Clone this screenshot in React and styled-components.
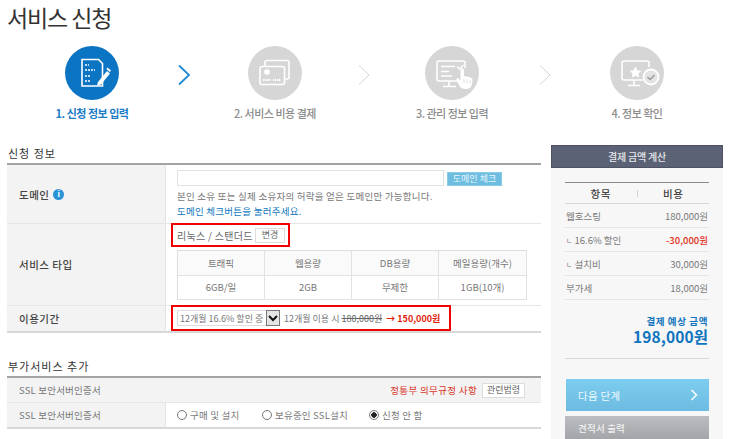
import React from "react";
import styled, { createGlobalStyle } from "styled-components";

const GlobalStyle = createGlobalStyle`
  html, body {
    margin: 0;
    padding: 0;
    background: #fff;
  }
  body {
    font-family: "Noto Sans CJK KR", "Liberation Sans", sans-serif;
    font-size: 10px;
    color: #666;
  }
  * {
    box-sizing: border-box;
  }
`;

const Page = styled.div`
  width: 730px;
  height: 439px;
  overflow: hidden;
  padding-left: 7px;
`;

const Title = styled.h1`
  margin: 0;
  height: 46px;
  padding-top: 2px;
  font-size: 23px;
  line-height: 30px;
  font-weight: 400;
  letter-spacing: -1.1px;
  color: #333;
`;

const Steps = styled.div`
  display: flex;
  align-items: flex-start;
  padding-left: 25px;
  height: 99px;
`;

const Step = styled.div`
  width: 120px;
  display: flex;
  flex-direction: column;
  align-items: center;
`;

const Circle = styled.div`
  width: 54px;
  height: 54px;
  border-radius: 50%;
  background: ${(p) => (p.$active ? "#0b75c4" : "#d6d6d6")};
`;

const StepLabel = styled.div`
  margin-top: 3px;
  font-size: 11px;
  line-height: 20px;
  font-weight: ${(p) => (p.$active ? 700 : 500)};
  letter-spacing: -0.5px;
  color: ${(p) => (p.$active ? "#1b7cc8" : "#8c8c8c")};
`;

const Arrow = styled.div`
  width: ${(p) => p.$w}px;
  height: 54px;
  padding-top: 4px;
  display: flex;
  align-items: center;
  justify-content: center;
`;

const Columns = styled.div`
  display: flex;
  gap: 10px;
`;

const Main = styled.div`
  width: 534px;
`;

const SectionTitle = styled.h2`
  margin: 0;
  height: ${(p) => p.$h}px;
  font-size: 11px;
  line-height: 16px;
  font-weight: 400;
  letter-spacing: 1px;
  color: #333;
  padding: ${(p) => p.$top}px 0 0 1px;
  border-bottom: 2px solid #a3a3a3;
`;

const Row = styled.div`
  display: flex;
  height: ${(p) => p.$h}px;
  border-bottom: ${(p) => (p.$last ? "2px solid #d8d8d8" : "1px solid #e6e6e6")};
`;

const Label = styled.div`
  width: 159px;
  flex: none;
  display: flex;
  align-items: center;
  gap: 4px;
  padding-left: 12px;
  background: #f3f3f3;
  border-right: 1px solid #e2e2e2;
  font-size: ${(p) => (p.$bold ? "10.5px" : "9.5px")};
  font-weight: ${(p) => (p.$bold ? 500 : 400)};
  letter-spacing: ${(p) => (p.$bold ? "0.5px" : "0.2px")};
  color: ${(p) => (p.$bold ? "#444" : "#777")};
`;

const Cell = styled.div`
  flex: 1;
  min-width: 0;
  padding: ${(p) => p.$pad || "0 0 0 11px"};
`;

const InfoDot = styled.span`
  width: 11px;
  height: 11px;
  border-radius: 50%;
  background: #2a94d6;
  color: #fff;
  font-family: "Liberation Sans", sans-serif;
  font-size: 9px;
  font-weight: 700;
  line-height: 11px;
  text-align: center;
`;

const DomainLine = styled.div`
  display: flex;
  align-items: flex-start;
  gap: 3px;
`;

const DomainInput = styled.input`
  width: 267px;
  height: 16px;
  padding: 0 4px;
  border: 1px solid #e0e0e0;
  background: #fff;
  outline: none;
`;

const CheckButton = styled.button`
  width: 55px;
  height: 14px;
  margin-top: 2px;
  padding: 0;
  border: 1px solid #8accE6;
  background: #6dbde0;
  color: #e8f6fc;
  font-family: inherit;
  font-size: 9px;
  line-height: 12px;
`;

const Hint = styled.p`
  margin: 0;
  height: 15px;
  font-size: 9.5px;
  line-height: 15px;
  letter-spacing: 0.25px;
  color: ${(p) => (p.$link ? "#0f77bd" : "#777")};
  &:first-of-type {
    margin-top: 3px;
  }
`;

const Highlight = styled.div`
  display: flex;
  align-items: center;
  border: 2px solid #f00000;
  margin: -1px 0 0 -6px;
  width: ${(p) => p.$w}px;
  height: ${(p) => p.$h}px;
  padding-left: ${(p) => p.$pad}px;
`;

const PlanName = styled.span`
  flex: none;
  width: 78px;
  font-size: 10px;
  letter-spacing: 0.3px;
  color: #666;
  white-space: nowrap;
`;

const SmallButton = styled.button`
  flex: none;
  width: ${(p) => p.$w}px;
  height: 15px;
  padding: 0;
  margin-left: ${(p) => p.$left || 0}px;
  border: 1px solid #ddd;
  background: #fff;
  color: #666;
  font-family: inherit;
  font-size: 9px;
  line-height: 12px;
  white-space: nowrap;
`;

const SpecTable = styled.div`
  display: grid;
  grid-template-columns: 87px 87px 87px 88px;
  width: 350px;
  margin-top: 3px;
  border-top: 1px solid #ddd;
  border-left: 1px solid #ddd;
`;

const SpecCell = styled.div`
  height: 24.5px;
  display: flex;
  align-items: center;
  justify-content: center;
  font-size: 9.5px;
  color: #777;
  background: ${(p) => (p.$head ? "#fafafa" : "#fff")};
  border-right: 1px solid #e2e2e2;
  border-bottom: 1px solid #e2e2e2;
`;

const FakeSelect = styled.div`
  display: flex;
  align-items: center;
  justify-content: space-between;
  width: 103px;
  height: 16px;
  flex: none;
  padding-left: 2px;
  border: 1px solid #ddd;
  font-size: 9px;
  color: #777;
  white-space: nowrap;
`;

const SelectArrow = styled.span`
  width: 14px;
  height: 16px;
  margin-right: -1px;
  flex: none;
  display: flex;
  align-items: center;
  justify-content: center;
  background: #e4e4e4;
  border: 1px solid #777;
`;

const PeriodText = styled.span`
  margin-left: 4px;
  font-size: 9px;
  color: #777;
  white-space: nowrap;
`;

const OldPrice = styled.span`
  text-decoration: line-through;
  color: #666;
`;

const NewPrice = styled.span`
  margin-left: 4px;
  font-size: 9px;
  font-weight: 700;
  color: #e01e0a;
  white-space: nowrap;
`;

const SslHead = styled.div`
  display: flex;
  align-items: center;
  justify-content: space-between;
  height: 25px;
  padding: 0 16px 0 12px;
  background: #f3f3f3;
  border-bottom: 1px solid #e6e6e6;
  font-size: 9.5px;
  letter-spacing: 0.2px;
  color: #777;
`;

const Notice = styled.div`
  display: flex;
  align-items: center;
  font-size: 9.5px;
  letter-spacing: 0.35px;
  color: #d9341f;
`;

const RadioGroup = styled.div`
  display: flex;
  align-items: center;
  height: 100%;
  padding-left: 11px;
`;

const RadioLabel = styled.label`
  width: ${(p) => p.$w}px;
  display: flex;
  align-items: center;
  gap: 3px;
  font-size: 9.5px;
  letter-spacing: 0.2px;
  color: #777;
`;

const Radio = styled.input`
  appearance: none;
  width: 10px;
  height: 10px;
  margin: 0;
  flex: none;
  border: 1px solid #777;
  border-radius: 50%;
  background: #fff;
  &:checked {
    background: radial-gradient(circle, #222 0 2.5px, #fff 3px);
  }
`;

const Side = styled.aside`
  width: 172px;
  height: 294px;
  background: #f7f7f7;
`;

const SideHead = styled.div`
  height: 23px;
  display: flex;
  align-items: center;
  justify-content: center;
  background: #5b6275;
  border: 1px solid #4c5263;
  font-size: 10px;
  font-weight: 500;
  letter-spacing: -0.2px;
  color: #e8e9ec;
`;

const SideBody = styled.div`
  padding: 14px 14px 0 14px;
`;

const PriceHead = styled.div`
  display: flex;
  height: 22px;
  align-items: center;
  border-top: 1px solid #8b8b8b;
  border-bottom: 1px solid #d6d6d6;
  font-size: 10.5px;
  font-weight: 500;
  letter-spacing: 0.6px;
  color: #444;
`;

const PriceHeadCell = styled.div`
  flex: 1;
  text-align: center;
`;

const PriceHeadDivider = styled.span`
  width: 1px;
  height: 7px;
  flex: none;
  background: #d4d4d4;
`;

const PriceRow = styled.div`
  display: flex;
  align-items: center;
  justify-content: space-between;
  height: 24px;
  padding: 0 1px;
  border-bottom: 1px solid #e6e6e6;
  font-size: 9.5px;
  color: #777;
`;

const PriceTick = styled.span`
  font-size: 7px;
  margin-right: 2px;
  vertical-align: 1px;
`;

const PriceValue = styled.span`
  font-size: 9.5px;
  font-weight: ${(p) => (p.$red ? 500 : 400)};
  color: ${(p) => (p.$red ? "#e0301a" : "#777")};
`;

const Total = styled.div`
  height: 59px;
  padding: 14px 1px 0 0;
  text-align: right;
  border-bottom: 1px solid #d8d8d8;
`;

const TotalLabel = styled.div`
  font-size: 9.5px;
  line-height: 14px;
  font-weight: 700;
  letter-spacing: 0.6px;
  color: #1274bd;
`;

const TotalAmount = styled.div`
  font-size: 15.5px;
  line-height: 16px;
  font-weight: 700;
  letter-spacing: 0.1px;
  color: #0f74be;
`;

const NextButton = styled.div`
  display: flex;
  align-items: center;
  justify-content: space-between;
  height: 32px;
  margin: 20px 0 5px 1px;
  padding: 0 11px 0 12px;
  background: linear-gradient(#7ccdf0, #6dbbe0);
  font-size: 10.5px;
  letter-spacing: 0.3px;
  color: #eef9fe;
`;

const QuoteButton = styled.div`
  display: flex;
  align-items: center;
  height: 24px;
  padding-left: 13px;
  background: linear-gradient(#bcbdc0, #a3a4a7);
  font-size: 9.5px;
  font-weight: 500;
  letter-spacing: 0.2px;
  color: #f2f2f2;
`;

const steps = [
  { label: "1. 신청 정보 입력", active: true },
  { label: "2. 서비스 비용 결제" },
  { label: "3. 관리 정보 입력" },
  { label: "4. 정보 확인" },
];

const specs = [
  ["트래픽", "6GB/일"],
  ["웹용량", "2GB"],
  ["DB용량", "무제한"],
  ["메일용량(개수)", "1GB(10개)"],
];

const prices = [
  { name: "웹호스팅", value: "180,000원" },
  { name: "16.6% 할인", value: "-30,000원", red: true, sub: true },
  { name: "설치비", value: "30,000원", sub: true },
  { name: "부가세", value: "18,000원" },
];

const DocIcon = () => (
  <svg width="54" height="54" viewBox="0 0 54 54">
    <path d="M17 13.500h16.500l4 4V40H17z" fill="none" stroke="#fff" strokeWidth="1.600" />
    <path d="M20 19h4M20 24h10M20 30h6M20 35h6" stroke="#fff" strokeWidth="1.500" strokeDasharray="2 1" />
    <path d="M33 36l9-11 3 2.500-9 11-4 1z" fill="#fff" />
    <path d="M42.500 21.500l3.500 3-1.200 1.500-3.500-3z" fill="#fff" />
  </svg>
);

const CardIcon = () => (
  <svg width="54" height="54" viewBox="0 0 54 54" fill="none" stroke="#fff">
    <path d="M17 20v-3.500a2 2 0 0 1 2-2h20a2 2 0 0 1 2 2V31a2 2 0 0 1-2 2h-2.500" strokeWidth="1.600" />
    <rect x="12" y="20.500" width="24.500" height="18" rx="2" strokeWidth="1.600" />
    <circle cx="19" cy="26" r="2.800" fill="#fff" stroke="none" />
    <path d="M15 34h8M25 34h8" strokeWidth="2" strokeDasharray="1.400 .6" />
  </svg>
);

const MonitorIcon = () => (
  <svg width="54" height="54" viewBox="0 0 54 54" fill="none" stroke="#fff">
    <path d="M36 35H14a2 2 0 0 1-2-2V17a2 2 0 0 1 2-2h24a2 2 0 0 1 2 2v5" strokeWidth="1.600" />
    <path d="M24 35v5M18 40.500h13" strokeWidth="1.600" />
    <path d="M16 20.500h14M16 25.500h8M16 30h11" strokeWidth="1.600" />
    <path d="M32 20.500l2.500 2.500 4-4" strokeWidth="1.400" />
    <path d="M35.500 24a1.700 1.700 0 0 1 3.400 0v6l6 1.200c1.600.4 2.600 1.600 2.600 3.300 0 4-1.500 8-5.500 8.500-4 .5-6.500-1-8-4l-2.500-5c-.6-1.600 1.400-2.600 2.400-1.300l1.600 2z" fill="#fff" stroke="none" />
    <path d="M39 33v4M42 33.500v4M45 34.500v3" stroke="#d6d6d6" strokeWidth=".8" />
  </svg>
);

const StarIcon = () => (
  <svg width="54" height="54" viewBox="0 0 54 54" fill="none" stroke="#fff">
    <path d="M33 34H14a2 2 0 0 1-2-2V17a2 2 0 0 1 2-2h23a2 2 0 0 1 2 2v4" strokeWidth="1.600" />
    <path d="M24 34v5M18 39.500h12" strokeWidth="1.600" />
    <path d="M25.500 20.500l1.800 3.800 4.100.5-3 2.900.8 4.100-3.700-2-3.700 2 .8-4.100-3-2.900 4.100-.5z" fill="#fff" stroke="none" />
    <circle cx="41" cy="31" r="7.500" fill="#e4e4e4" strokeWidth="1.800" />
    <path d="M37.500 31l2.700 2.600 4.300-4.600" stroke="#9a9a9a" strokeWidth="1.400" />
  </svg>
);

const stepIcons = [DocIcon, CardIcon, MonitorIcon, StarIcon];

const StepArrow = ({ active }) => (
  <svg width="14" height="24" viewBox="0 0 14 24" fill="none">
    {active ? (
      <path d="M2 2.500l10 9.500-10 9.500" stroke="#1f8ad6" strokeWidth="1.800" />
    ) : (
      <path d="M2 2.500l10 9.500-10 9.500" stroke="#cfcfcf" strokeWidth="0.900" />
    )}
  </svg>
);

const ChevronDown = () => (
  <svg width="10" height="10" viewBox="0 0 10 10" fill="none">
    <path d="M1 3l4 4 4-4" stroke="#111" strokeWidth="2" />
  </svg>
);

const ChevronRight = () => (
  <svg width="8" height="14" viewBox="0 0 8 14" fill="none">
    <path d="M1.500 2l5 5-5 5" stroke="#fff" strokeWidth="1.500" />
  </svg>
);

export default function App() {
  const arrowWidths = [63, 57, 65];
  return (
    <Page>
      <GlobalStyle />
      <Title>서비스 신청</Title>

      <Steps>
        {steps.map((step, index) => {
          const Icon = stepIcons[index];
          return (
            <React.Fragment key={step.label}>
              <Step>
                <Circle $active={step.active}>
                  <Icon />
                </Circle>
                <StepLabel $active={step.active}>{step.label}</StepLabel>
              </Step>
              {index < 3 && (
                <Arrow $w={arrowWidths[index]}>
                  <StepArrow active={index === 0} />
                </Arrow>
              )}
            </React.Fragment>
          );
        })}
      </Steps>

      <Columns>
        <Main>
          <SectionTitle $h={20} $top={0}>신청 정보</SectionTitle>
          <Row $h={59}>
            <Label $bold>
              도메인 <InfoDot>i</InfoDot>
            </Label>
            <Cell $pad="5px 0 0 11px">
              <DomainLine>
                <DomainInput />
                <CheckButton>도메인 체크</CheckButton>
              </DomainLine>
              <Hint>본인 소유 또는 실제 소유자의 허락을 얻은 도메인만 가능합니다.</Hint>
              <Hint $link>도메인 체크버튼을 눌러주세요.</Hint>
            </Cell>
          </Row>
          <Row $h={82}>
            <Label $bold>서비스 타입</Label>
            <Cell>
              <Highlight $w={119} $h={24} $pad={4}>
                <PlanName>리눅스 / 스탠더드</PlanName>
                <SmallButton $w={30}>변경</SmallButton>
              </Highlight>
              <SpecTable>
                {specs.map((spec) => (
                  <SpecCell $head key={spec[0]}>{spec[0]}</SpecCell>
                ))}
                {specs.map((spec) => (
                  <SpecCell key={spec[1]}>{spec[1]}</SpecCell>
                ))}
              </SpecTable>
            </Cell>
          </Row>
          <Row $h={27} $last>
            <Label $bold>이용기간</Label>
            <Cell>
              <Highlight $w={280} $h={26} $pad={4}>
                <FakeSelect>
                  12개월 16.6% 할인 중
                  <SelectArrow>
                    <ChevronDown />
                  </SelectArrow>
                </FakeSelect>
                <PeriodText>
                  12개월 이용 시 <OldPrice>180,000원</OldPrice>
                </PeriodText>
                <NewPrice>→ 150,000원</NewPrice>
              </Highlight>
            </Cell>
          </Row>

          <SectionTitle $h={45} $top={25}>부가서비스 추가</SectionTitle>
          <SslHead>
            SSL 보안서버인증서
            <Notice>
              정통부 의무규정 사항
              <SmallButton $w={43} $left={5}>관련법령</SmallButton>
            </Notice>
          </SslHead>
          <Row $h={26} $last>
            <Label>SSL 보안서버인증서</Label>
            <Cell $pad="0">
              <RadioGroup>
                <RadioLabel $w={85}>
                  <Radio type="radio" name="ssl" /> 구매 및 설치
                </RadioLabel>
                <RadioLabel $w={107}>
                  <Radio type="radio" name="ssl" /> 보유중인 SSL설치
                </RadioLabel>
                <RadioLabel $w={80}>
                  <Radio type="radio" name="ssl" defaultChecked /> 신청 안 함
                </RadioLabel>
              </RadioGroup>
            </Cell>
          </Row>
        </Main>

        <Side>
          <SideHead>결제 금액 계산</SideHead>
          <SideBody>
            <PriceHead>
              <PriceHeadCell>항목</PriceHeadCell>
              <PriceHeadDivider />
              <PriceHeadCell>비용</PriceHeadCell>
            </PriceHead>
            {prices.map((price) => (
              <PriceRow key={price.name}>
                <span>
                  {price.sub && <PriceTick>ㄴ</PriceTick>}
                  {price.name}
                </span>
                <PriceValue $red={price.red}>{price.value}</PriceValue>
              </PriceRow>
            ))}
            <Total>
              <TotalLabel>결제 예상 금액</TotalLabel>
              <TotalAmount>198,000원</TotalAmount>
            </Total>
            <NextButton>
              다음 단계
              <ChevronRight />
            </NextButton>
            <QuoteButton>견적서 출력</QuoteButton>
          </SideBody>
        </Side>
      </Columns>
    </Page>
  );
}
